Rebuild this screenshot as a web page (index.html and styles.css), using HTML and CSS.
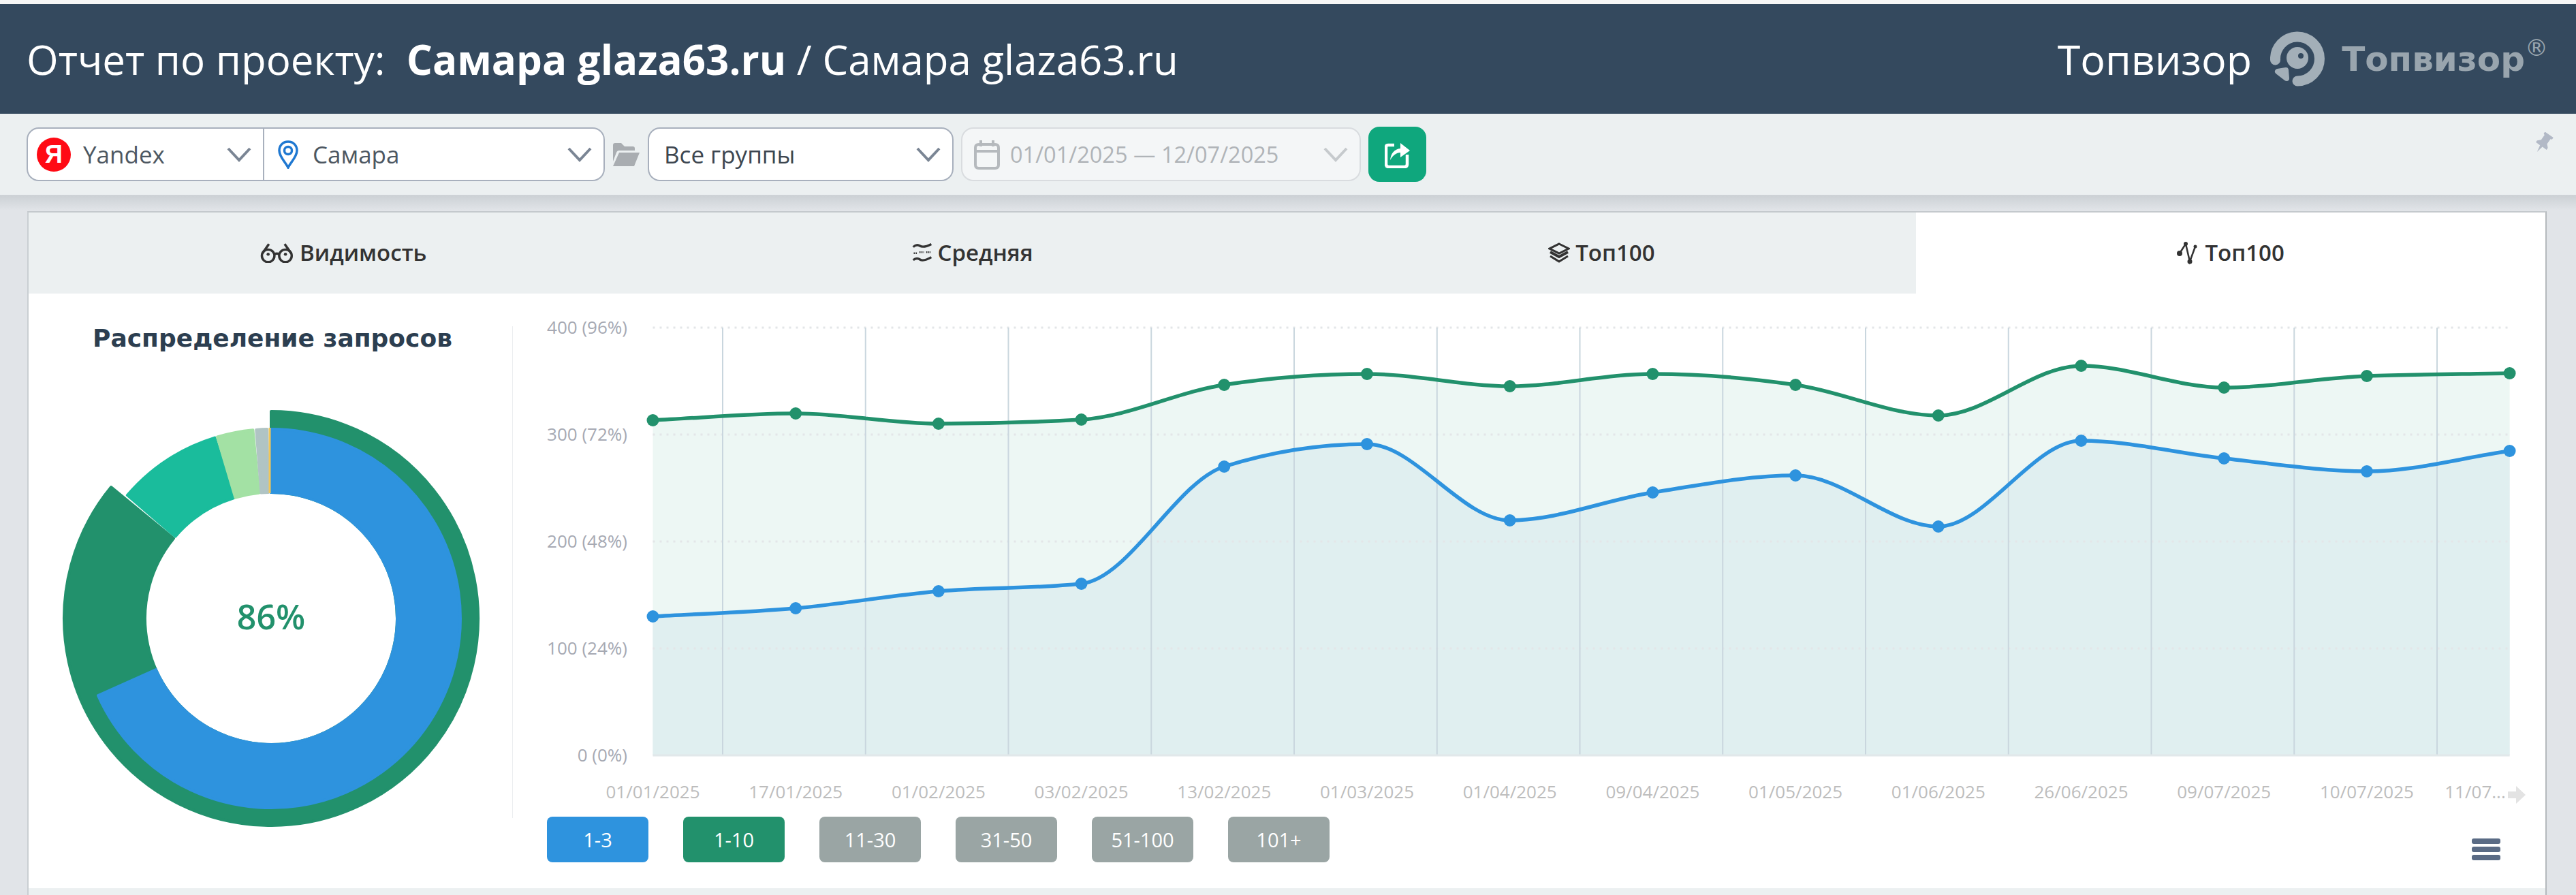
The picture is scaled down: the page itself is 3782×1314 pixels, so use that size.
FILE: index.html
```html
<!DOCTYPE html>
<html lang="ru">
<head>
  <meta charset="UTF-8" />
  <title>Отчет по проекту</title>
  <link rel="stylesheet" href="styles.css">
</head>
<body>

  <div class="top-bar">
    <h1 class="page-title">Отчет по проекту:&nbsp; <b>Самара glaza63.ru</b> / Самара glaza63.ru</h1>
    <div class="brand">
      <span class="brand-name">Топвизор</span>
      <svg class="brand-icon" viewBox="0 0 81 81">
        <path d="M7.5 42A32.5 32.5 0 1 1 40 73" fill="none" stroke="#a3afb8" stroke-width="15" stroke-linecap="round"/>
        <circle cx="40" cy="39" r="16" fill="#a3afb8"/>
        <circle cx="45" cy="36" r="4" fill="#34495e"/>
        <path d="M11 59L23 57L24 69Z" fill="#a3afb8" stroke="#a3afb8" stroke-width="8" stroke-linejoin="round"/>
      </svg>
      <span class="brand-logo">Топвизор<sup>®</sup></span>
    </div>
  </div>

  <div class="toolbar">
    <div class="select-group">
      <div class="select select-engine">
        <span class="yandex-icon">Я</span>
        <span>Yandex</span>
        <svg class="chevron" viewBox="0 0 36 22"><path d="M2 2L18 19L34 2" /></svg>
      </div>
      <div class="select select-region">
        <svg class="pin-icon" viewBox="0 0 32 42">
          <path d="M16 2C8 2 3 8 3 15C3 24 12 32 16 40C20 32 29 24 29 15C29 8 24 2 16 2Z" fill="none" stroke="#1f78d1" stroke-width="3.5"/>
          <circle cx="16" cy="15" r="5.5" fill="none" stroke="#1f78d1" stroke-width="3.5"/>
        </svg>
        <span>Самара</span>
        <svg class="chevron" viewBox="0 0 36 22"><path d="M2 2L18 19L34 2" /></svg>
      </div>
    </div>
    <svg class="folder-icon" viewBox="0 0 42 36">
      <path d="M2 4Q2 1 5 1H14L19 6H31Q34 6 34 9V12H11Q8 12 7 15L2 28Z" fill="#a9adb1"/>
      <path d="M11 15H41L33 35H2Z" fill="#a9adb1"/>
    </svg>
    <div class="select select-groups">
      <span>Все группы</span>
      <svg class="chevron" viewBox="0 0 36 22"><path d="M2 2L18 19L34 2" /></svg>
    </div>
    <div class="select select-dates">
      <svg class="calendar-icon" viewBox="0 0 40 44">
        <path d="M3 12Q3 7 8 7H32Q37 7 37 12V37Q37 42 32 42H8Q3 42 3 37Z" fill="none" stroke="#b5b9bd" stroke-width="4"/>
        <path d="M3 17H37M11 1V10M29 1V10" fill="none" stroke="#b5b9bd" stroke-width="4"/>
      </svg>
      <span>01/01/2025 — 12/07/2025</span>
      <svg class="chevron" viewBox="0 0 36 22"><path d="M2 2L18 19L34 2" /></svg>
    </div>
    <button class="share-btn">
      <svg viewBox="0 0 38 40">
        <path d="M14 6H5Q2 6 2 9V34Q2 38 6 38H29Q33 38 33 34V20" fill="none" stroke="#fff" stroke-width="4.5"/>
        <path d="M8 28C9 18 14 12 23 11V3L37 14L23 24V17C17 17 12 21 8 28Z" fill="#fff"/>
      </svg>
    </button>
    <svg class="pin-top" viewBox="0 0 30 30">
      <path transform="rotate(35 15 15)" d="M8 1H22V4L20 5V13L24 17V20H17L15 30L13 20H6V17L10 13V5L8 4Z" fill="#b2b9c6"/>
    </svg>
  </div>

  <div class="content">
    <div class="panel">
      <div class="tabs">
        <div class="tab">
          <svg viewBox="0 0 44 26">
            <circle cx="11" cy="17" r="8" /><circle cx="33" cy="17" r="8" />
            <circle class="dot" cx="11" cy="15" r="2"/><circle class="dot" cx="33" cy="15" r="2"/>
            <path d="M19 15Q22 13 25 15M3.5 14L12 2M40.5 14L32 2" />
          </svg>
          Видимость
        </div>
        <div class="tab">
          <svg viewBox="0 0 36 36">
            <path d="M2 8Q8 2 14 6T34 3M2 31Q8 26 14 30T34 26" stroke-width="4"/>
            <path d="M3 19H9M13 17H21M25 17H33" stroke-width="3" stroke-dasharray="2 1.5"/>
          </svg>
          Средняя
        </div>
        <div class="tab">
          <svg viewBox="0 0 32 30">
            <path d="M16 2L30 9L16 16L2 9Z" />
            <path class="thick" d="M3 14L16 21L29 14" />
            <path d="M3 20L16 28L29 20" />
          </svg>
          Топ100
        </div>
        <div class="tab tab-active">
          <svg class="tab-icon-line" viewBox="0 0 30 38">
            <path d="M4 20L13 6L19 32L27 10" stroke-width="2.5"/>
            <circle class="dot" cx="4" cy="20" r="4"/><circle class="dot" cx="13" cy="6" r="3"/>
            <circle class="dot" cx="19" cy="32" r="3.5"/><circle class="dot" cx="27" cy="10" r="2.5"/>
          </svg>
          Топ100
        </div>
      </div>

      <div class="report">
        <div class="donut-col">
          <h3 class="donut-title">Распределение запросов</h3>
          <div class="donut">
            <svg viewBox="-308 -308 616 616">
              <path fill="#22916c" stroke="#22916c" d="M0 -304A304 304 0 1 1 -234.9 -192.9L-143 -117.4A185 185 0 1 0 0 -185Z"/>
              <path fill="#2e93de" stroke="#2e93de" d="M0 -278A278 278 0 1 1 -254 113.1L-169 75.2A185 185 0 1 0 0 -185Z"/>
              <path fill="#1abc9c" stroke="#1abc9c" d="M-211.1 -180.9A278 278 0 0 1 -82.7 -265.4L-55 -176.6A185 185 0 0 0 -140.5 -120.4Z"/>
              <path fill="#a3e1a4" stroke="#a3e1a4" d="M-79 -266.5A278 278 0 0 1 -26.6 -276.7L-17.7 -184.2A185 185 0 0 0 -52.5 -177.4Z"/>
              <path fill="#b0c4c4" stroke="#b0c4c4" d="M-21.8 -277.1A278 278 0 0 1 -5.8 -277.9L-3.9 -184.9A185 185 0 0 0 -14.5 -184.4Z"/>
              <path class="sliver" d="M-2 -280V-184"/>
            </svg>
            <span class="donut-value">86%</span>
          </div>
        </div>

        <div class="chart-col">
          <svg id="chart" class="chart" width="2985" height="770"></svg>
          <div class="legend">
            <button class="legend-btn btn-blue">1-3</button>
            <button class="legend-btn btn-green">1-10</button>
            <button class="legend-btn">11-30</button>
            <button class="legend-btn">31-50</button>
            <button class="legend-btn">51-100</button>
            <button class="legend-btn">101+</button>
            <div class="menu-icon"><i></i><i></i><i></i></div>
          </div>
        </div>
      </div>
      <div class="panel-foot"></div>
    </div>
  </div>

  <script src="chart.js"></script>
</body>
</html>
```
FILE: styles.css
```css
* {
  box-sizing: border-box;
}
body {
  margin: 0;
  height: 1314px;
  overflow: hidden;
  font-family: 'Open Sans', sans-serif;
  background-color: #e1e4e8;
  color: #2c3e50;
}
.top-bar {
  height: 167px;
  border-top: 6px solid #f6f6f6;
  background-color: #34495e;
  background-clip: padding-box;
  display: flex;
  justify-content: space-between;
  align-items: center;
  padding: 0 41px 0 39px;
  color: #fff;
}
.page-title {
  margin: 0;
  font-size: 60px;
  font-weight: 400;
}
.page-title b {
  font-weight: 700;
}
.brand {
  display: flex;
  align-items: center;
}
.brand-name {
  font-size: 61px;
  margin-right: 27px;
}
.brand-icon {
  width: 81px;
  height: 81px;
  margin-right: 24px;
}
.brand-logo {
  font-size: 50px;
  font-weight: 700;
  color: #99a5ae;
  font-family: 'DejaVu Sans', sans-serif;
}
.brand-logo sup {
  font-size: 34px;
  font-weight: 400;
  line-height: 0;
  vertical-align: 22px;
}
.toolbar {
  height: 120px;
  background-color: #ecf0f1;
  border-bottom: 1px solid #d0d4d8;
  display: flex;
  align-items: center;
  padding: 0 32px 0 39px;
}
.select-group {
  display: flex;
  width: 849px;
}
.select {
  height: 79px;
  display: flex;
  align-items: center;
  background-color: #fff;
  border: 2px solid #a8b0bd;
  border-radius: 18px;
  font-size: 35px;
  color: #4d5761;
}
.chevron {
  width: 36px;
  height: 22px;
  margin-left: auto;
  fill: none;
  stroke: #7a8594;
  stroke-width: 4;
}
.select-engine {
  width: 349px;
  border-radius: 18px 0 0 18px;
  padding: 0 17px 0 13px;
  gap: 18px;
}
.select-region {
  width: 500px;
  border-left: none;
  border-radius: 0 18px 18px 0;
  padding: 0 17px 0 19px;
  gap: 20px;
}
.yandex-icon {
  width: 50px;
  height: 50px;
  border-radius: 50%;
  background-color: #ff0a14;
  color: #fff;
  font-size: 36px;
  font-weight: 700;
  text-align: center;
  line-height: 50px;
  font-family: 'Liberation Sans', sans-serif;
}
.pin-icon {
  width: 32px;
  height: 42px;
}
.folder-icon {
  width: 42px;
  height: 36px;
  margin: 0 11px 0 10px;
}
.select-groups {
  width: 449px;
  padding: 0 17px 0 22px;
  color: #3d4650;
}
.select-dates {
  width: 587px;
  margin-left: 11px;
  padding: 0 17px 0 16px;
  gap: 14px;
  background-color: #f4f6f7;
  border-color: #d9dcdf;
  color: #b0b4b8;
  font-size: 32.5px;
}
.select-dates .chevron {
  stroke: #c6cacd;
}
.calendar-icon {
  width: 40px;
  height: 44px;
}
.share-btn {
  width: 85px;
  height: 81px;
  margin-left: 11px;
  background-color: #0fa77d;
  border: none;
  border-radius: 16px;
  padding: 0;
  display: flex;
  align-items: center;
  justify-content: center;
}
.share-btn svg {
  width: 38px;
  height: 40px;
}
.pin-top {
  width: 32px;
  height: 32px;
  margin: -34px 0 0 auto;
}
.content {
  padding: 0 43px 0 40px;
  height: 1027px;
  background: linear-gradient(#ccd1d5, #e1e4e8 22px);
}
.panel {
  position: relative;
  top: 23px;
  border-top: 2px solid #c4c9cd;
  border-left: 2px solid #c9ced2;
  border-right: 2px solid #b5b9bd;
  background-color: #fff;
}
.tabs {
  display: grid;
  grid-template-columns: repeat(4, 1fr);
  height: 119px;
}
.tab {
  display: flex;
  align-items: center;
  justify-content: center;
  gap: 8px;
  padding-bottom: 2px;
  background-color: #ecf0f1;
  font-size: 33px;
  font-weight: 600;
  color: #333;
}
.tab-active {
  background-color: #fff;
  gap: 11px;
}
.tab svg {
  height: 30px;
  width: auto;
  fill: none;
  stroke: #333;
  stroke-width: 3;
}
.tab svg .dot {
  fill: #333;
  stroke: none;
}
.tab svg .thick {
  stroke-width: 4;
}
.tab svg.tab-icon-line {
  height: 38px;
}
.report {
  display: flex;
  height: 873px;
}
.donut-col {
  width: 710px;
  padding: 43px 0 0 6px;
}
.donut-title {
  margin: 0;
  text-align: center;
  font-family: 'DejaVu Sans', sans-serif;
  font-size: 36px;
  line-height: 46px;
  font-weight: 700;
  color: #2c3e50;
}
.donut {
  width: 616px;
  height: 616px;
  margin: 80px 0 0 42px;
  position: relative;
}
.donut svg {
  width: 616px;
  height: 616px;
  display: block;
}
.donut svg path {
  stroke-width: 4;
  stroke-linejoin: round;
}
.donut svg .sliver {
  fill: none;
  stroke: #f1c75b;
  stroke-width: 3;
}
.donut-value {
  position: absolute;
  top: 50%;
  left: 50%;
  transform: translate(-50%, -54%);
  font-size: 50px;
  font-weight: 600;
  color: #22916c;
}
.chart-col {
  flex: 1;
  min-width: 0;
  position: relative;
}
.chart {
  display: block;
  position: absolute;
  left: 0;
  top: 0;
  font-family: 'Open Sans', sans-serif;
}
.grid-h {
  stroke: #e3e6e8;
  stroke-width: 3;
  stroke-dasharray: 3 7;
}
.grid-v {
  stroke: #c9d6de;
  stroke-width: 2;
}
.baseline {
  stroke: #e1e8ea;
  stroke-width: 3;
}
.col-line {
  stroke: #eceef0;
  stroke-width: 2;
}
.y-label {
  font-size: 26px;
  fill: #a6a9b3;
  text-anchor: end;
  dominant-baseline: central;
}
.x-label {
  font-size: 26px;
  fill: #bdbdbd;
  text-anchor: middle;
  dominant-baseline: central;
}
.arrow {
  fill: #e3e3e3;
}
.legend {
  position: absolute;
  left: 51px;
  right: 66px;
  top: 768px;
  display: flex;
  align-items: center;
  gap: 51px;
}
.legend-btn {
  width: 149px;
  height: 67px;
  border: none;
  border-radius: 8px;
  background-color: #9aa5a4;
  color: #fff;
  font-family: 'Open Sans', sans-serif;
  font-size: 29px;
  padding: 0;
}
.btn-blue {
  background-color: #2e93de;
}
.btn-green {
  background-color: #22916c;
}
.menu-icon {
  margin-left: auto;
  width: 42px;
  display: flex;
  flex-direction: column;
  gap: 4px;
  margin-top: 29px;
}
.menu-icon i {
  height: 8px;
  border-radius: 3px;
  background-color: #5a6b85;
}
.panel-foot {
  height: 10px;
  background-color: #ecf0f1;
}
```
FILE: chart.js
```js
// chart is drawn in page coords minus the place of the svg (x=752, y=431)
const ox = 752, oy = 431;
const svg = document.getElementById('chart');
const NS = 'http://www.w3.org/2000/svg';

const dates = ['01/01/2025','17/01/2025','01/02/2025','03/02/2025','13/02/2025','01/03/2025','01/04/2025',
  '09/04/2025','01/05/2025','01/06/2025','26/06/2025','09/07/2025','10/07/2025','11/07...'];
const green = [617,607,622,616,565,549,567,549,565,610,537,569,552,548];
const blue = [905,893,868,857,685,652,764,723,698,773,647,673,692,662];

const x0 = 958.5, step = 209.7, plotTop = 481, plotBottom = 1109;
const pts = arr => arr.map((y, i) => [x0 + step * i - ox, y - oy]);

function el(name, attrs, text) {
  const e = document.createElementNS(NS, name);
  for (const k in attrs) e.setAttribute(k, attrs[k]);
  if (text) e.textContent = text;
  svg.appendChild(e);
  return e;
}

// monotone curve, flat at every peak and dip
function spline(p) {
  const last = p.length - 1;
  const s = p.slice(0, last).map((a, i) => (p[i + 1][1] - a[1]) / (p[i + 1][0] - a[0]));
  const m = p.map((a, i) => {
    if (i === 0) return s[0];
    if (i === last) return s[last - 1];
    if (s[i - 1] * s[i] <= 0) return 0;
    const sign = s[i] > 0 ? 1 : -1;
    return sign * 2 * Math.min(Math.abs(s[i - 1]), Math.abs(s[i]), Math.abs(s[i - 1] + s[i]) / 4);
  });
  let d = `M${p[0][0]} ${p[0][1]}`;
  for (let i = 0; i < last; i++) {
    const h = (p[i + 1][0] - p[i][0]) / 3;
    d += `C${p[i][0] + h} ${p[i][1] + h * m[i]} ${p[i + 1][0] - h} ${p[i + 1][1] - h * m[i + 1]} ${p[i + 1][0]} ${p[i + 1][1]}`;
  }
  return d;
}

const left = x0 - ox, right = x0 + step * 13 - ox, base = plotBottom - oy;
const g = pts(green), b = pts(blue);

el('path', { d: spline(g) + `L${right} ${base}L${left} ${base}Z`, fill: '#edf7f4' });
el('path', { d: spline(b) + `L${right} ${base}L${left} ${base}Z`, fill: '#e0eff0' });

// dotted rows and y labels
['400 (96%)','300 (72%)','200 (48%)','100 (24%)','0 (0%)'].forEach((label, i) => {
  const y = plotTop + (plotBottom - plotTop) / 4 * i - oy;
  if (i < 4) el('line', { class: 'grid-h', x1: left, x2: right, y1: y, y2: y });
  el('text', { class: 'y-label', x: 921 - ox, y: y - 1 }, label);
});

// columns sit half way between the points
for (let i = 0; i < 13; i++) {
  const x = 1061 + 209.75 * i - ox;
  el('line', { class: 'grid-v', x1: x, x2: x, y1: plotTop - oy, y2: base });
}
el('line', { class: 'baseline', x1: left, x2: right, y1: base, y2: base });
el('line', { class: 'col-line', x1: 0, x2: 0, y1: 48, y2: 823 });

el('path', { d: spline(g), fill: 'none', stroke: '#22916c', 'stroke-width': 5.5 });
el('path', { d: spline(b), fill: 'none', stroke: '#2e93de', 'stroke-width': 5.5 });
g.forEach(p => el('circle', { cx: p[0], cy: p[1], r: 9, fill: '#22916c' }));
b.forEach(p => el('circle', { cx: p[0], cy: p[1], r: 9, fill: '#2e93de' }));

dates.forEach((d, i) => {
  const x = i === 13 ? 3634 - ox : x0 + step * i - ox;
  el('text', { class: 'x-label', x, y: 1162 - oy }, d);
});
el('path', { class: 'arrow', d: `M${3682 - ox} ${1162 - oy}h12v-8l14 13l-14 13v-8h-12z` });
```
